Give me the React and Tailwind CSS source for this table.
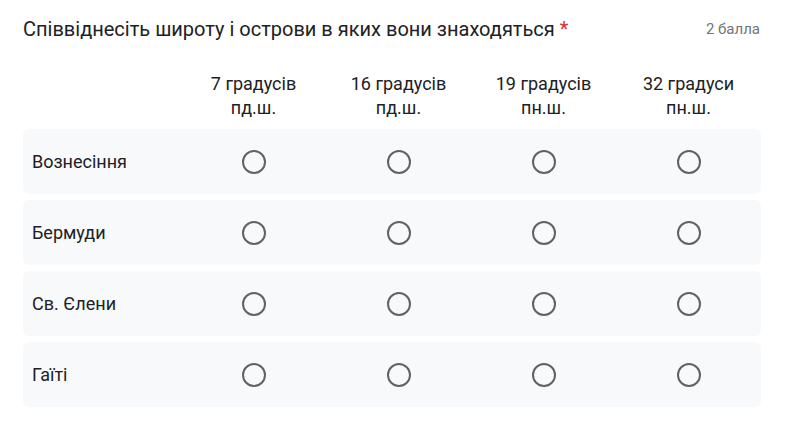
const columns = [
  ['7 градусів', 'пд.ш.'],
  ['16 градусів', 'пд.ш.'],
  ['19 градусів', 'пн.ш.'],
  ['32 градуси', 'пн.ш.'],
]

const rows = ['Вознесіння', 'Бермуди', 'Св. Єлени', 'Гаїті']

function Radio() {
  return <span className="block w-[24px] h-[24px] rounded-full border-2 border-[#5f6368]" />
}

export default function App() {
  return (
    <div
      className="w-[787px] h-[438px] bg-white text-[#202124] overflow-hidden"
      style={{ fontFamily: 'Roboto, "Noto Sans", sans-serif' }}
    >
      <div className="flex items-start justify-between pl-[23px] pr-[27px] pt-[16px]">
        <div className="text-[20px] leading-[26px]">
          Співвіднесіть широту і острови в яких вони знаходяться <span className="text-[#d93025]">*</span>
        </div>
        <div className="text-[15px] leading-[26px] text-[#70757a]">2 балла</div>
      </div>

      <div className="mx-[23px] w-[738px] mt-[30px]">
        <div className="grid grid-cols-[158px_repeat(4,145px)]">
          <div />
          {columns.map((c) => (
            <div key={c[0]} className="text-center text-[18px] leading-[24px]">
              <div>{c[0]}</div>
              <div>{c[1]}</div>
            </div>
          ))}
        </div>

        <div className="mt-[9px] flex flex-col gap-[6px]">
          {rows.map((r) => (
            <div
              key={r}
              className="grid grid-cols-[158px_repeat(4,145px)] items-center h-[65px] bg-[#f8f9fa] rounded-[6px]"
            >
              <div className="pl-[9px] text-[18px]">{r}</div>
              {columns.map((c) => (
                <div key={c[0]} className="flex justify-center">
                  <Radio />
                </div>
              ))}
            </div>
          ))}
        </div>
      </div>
    </div>
  )
}
